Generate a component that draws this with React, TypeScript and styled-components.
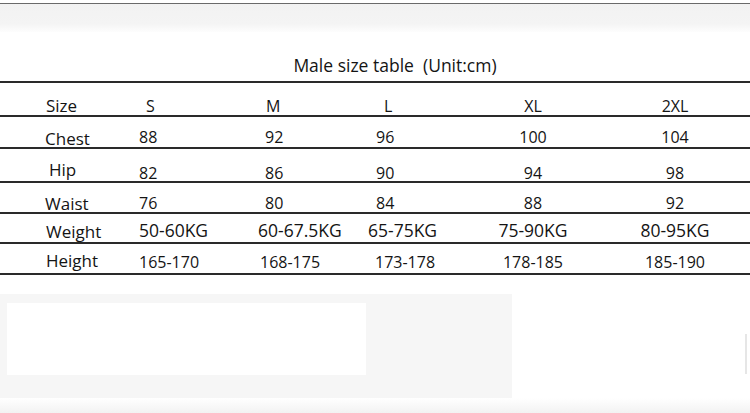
import React from "react";
import styled, { createGlobalStyle } from "styled-components";

const GlobalStyle = createGlobalStyle`
  html, body {
    margin: 0;
    padding: 0;
    background: #fff;
  }
  body {
    font-family: "Open Sans", "Liberation Sans", sans-serif;
    color: #141414;
  }
`;

const Page = styled.div`
  width: 750px;
  height: 413px;
  overflow: hidden;
  display: flex;
  flex-direction: column;
  background: #fff;
`;

const TopRule = styled.div`
  margin-top: 3px;
  height: 1px;
  background: #6a6a6a;
`;

const ScanBand = styled.div`
  height: 28px;
  background: linear-gradient(#f2f2f2 0%, #f4f4f4 70%, #fdfdfd 100%);
`;

const TitleRow = styled.div`
  height: 51px;
  display: flex;
  align-items: flex-end;
  justify-content: center;
  padding-left: 40px;
  padding-bottom: 7px;
  box-sizing: border-box;
  border-bottom: 2px solid #2a2a2a;
  font-size: 17.5px;
  line-height: 17px;
  white-space: pre;
`;

const Row = styled.div<{ $h: number }>`
  height: ${(p) => p.$h}px;
  display: grid;
  grid-template-columns: 139px 119px 110px 98px 134px 150px;
  align-items: end;
  border-bottom: 2px solid #2a2a2a;
`;

const Label = styled.div<{ $x: number; $pad: number }>`
  padding-left: ${(p) => p.$x}px;
  padding-bottom: ${(p) => p.$pad}px;
  font-size: 17px;
  line-height: 17px;
  white-space: nowrap;
`;

const Value = styled.div<{ $x?: number; $pad: number; $size: number; $center?: boolean }>`
  padding-left: ${(p) => p.$x ?? 0}px;
  padding-bottom: ${(p) => p.$pad}px;
  font-size: ${(p) => p.$size}px;
  line-height: ${(p) => p.$size}px;
  text-align: ${(p) => (p.$center ? "center" : "left")};
  white-space: nowrap;
`;

const BottomArea = styled.div`
  margin-top: 19px;
  height: 104px;
  display: flex;
  justify-content: space-between;
`;

const GreyPanel = styled.div`
  width: 512px;
  background: #f6f6f6;
  padding: 9px 0 0 7px;
  box-sizing: border-box;
`;

const WhiteBox = styled.div`
  width: 359px;
  height: 72px;
  background: #fff;
`;

const EdgeMark = styled.div`
  width: 2px;
  height: 40px;
  margin-top: 40px;
  margin-right: 3px;
  background: #e6e6e6;
`;

const FootBand = styled.div`
  flex: 1;
  background: linear-gradient(#fff, #f2f2f2);
`;

type Cell = { v: string; x?: number };
type RowData = {
  label: string;
  lx: number;
  lpad: number;
  h: number;
  size: number;
  pad: number;
  cells: Cell[];
};

const rows: RowData[] = [
  {
    label: "Size", lx: 46, lpad: 1, h: 32, size: 16, pad: 1,
    cells: [{ v: "S", x: 7 }, { v: "M", x: 8 }, { v: "L", x: 16 }, { v: "XL" }, { v: "2XL" }],
  },
  {
    label: "Chest", lx: 45, lpad: 0, h: 30, size: 16, pad: 2,
    cells: [{ v: "88", x: 0 }, { v: "92", x: 7 }, { v: "96", x: 8 }, { v: "100" }, { v: "104" }],
  },
  {
    label: "Hip", lx: 49, lpad: 3, h: 32, size: 16, pad: 0,
    cells: [{ v: "82", x: 0 }, { v: "86", x: 7 }, { v: "90", x: 8 }, { v: "94" }, { v: "98" }],
  },
  {
    label: "Waist", lx: 45, lpad: 0, h: 29, size: 16, pad: 1,
    cells: [{ v: "76", x: 0 }, { v: "80", x: 7 }, { v: "84", x: 8 }, { v: "88" }, { v: "92" }],
  },
  {
    label: "Weight", lx: 46, lpad: 2, h: 28, size: 17.5, pad: 3,
    cells: [{ v: "50-60KG", x: 0 }, { v: "60-67.5KG", x: 0 }, { v: "65-75KG", x: 0 }, { v: "75-90KG" }, { v: "80-95KG" }],
  },
  {
    label: "Height", lx: 46, lpad: 4, h: 29, size: 16, pad: 3,
    cells: [{ v: "165-170", x: 0 }, { v: "168-175", x: 2 }, { v: "173-178", x: 7 }, { v: "178-185" }, { v: "185-190" }],
  },
];

export default function App() {
  return (
    <Page>
      <GlobalStyle />
      <TopRule />
      <ScanBand />
      <TitleRow>{"Male size table  (Unit:cm)"}</TitleRow>
      {rows.map((r) => (
        <Row key={r.label} $h={r.h}>
          <Label $x={r.lx} $pad={r.lpad}>{r.label}</Label>
          {r.cells.map((c, i) => (
            <Value key={i} $x={c.x} $pad={r.pad} $size={r.size} $center={i >= 3}>
              {c.v}
            </Value>
          ))}
        </Row>
      ))}
      <BottomArea>
        <GreyPanel>
          <WhiteBox />
        </GreyPanel>
        <EdgeMark />
      </BottomArea>
      <FootBand />
    </Page>
  );
}
